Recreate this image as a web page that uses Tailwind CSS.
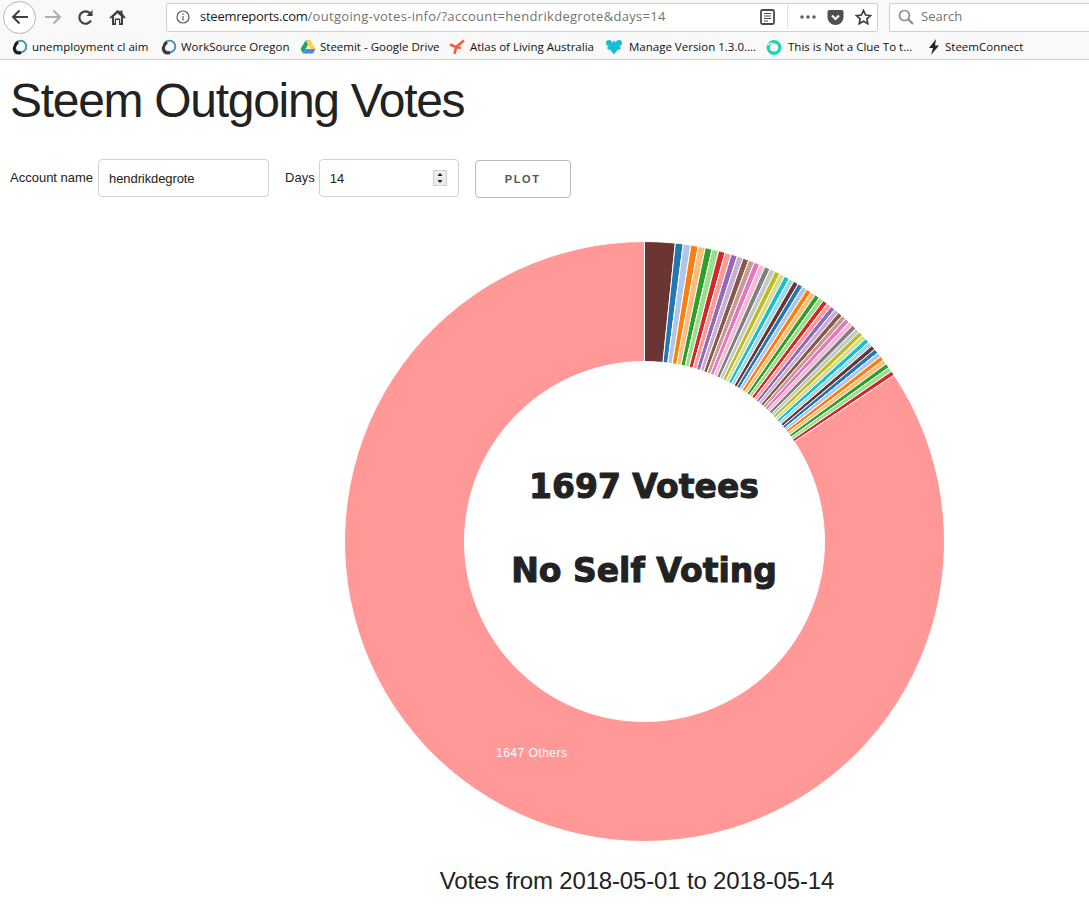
<!DOCTYPE html>
<html lang="en">

<head>
  <meta charset="UTF-8">
  <meta name="viewport" content="width=device-width, initial-scale=1.0">
  <title>Steem Outgoing Votes</title>
  <script src="https://cdn.jsdelivr.net/npm/@tailwindcss/browser@4"></script>
</head>

<body class="bg-white font-['Liberation_Sans',sans-serif] text-[#222] overflow-hidden">
  <!-- browser toolbar -->
  <div class="h-[34px] bg-[#f9f9fa] flex items-center pl-[3px] pr-0">
    <div class="w-[33px] h-[33px] rounded-full border border-[#b5b5b5] bg-white flex items-center justify-center">
      <svg class="w-[18px] h-[18px]" viewBox="0 0 18 18" fill="none" stroke="#3f3f41" stroke-width="2"><path d="M17 9H2M8.500 2.500 2 9l6.500 6.500"/></svg>
    </div>
    <svg class="w-[18px] h-[18px] ml-[8px]" viewBox="0 0 18 18" fill="none" stroke="#aeaeae" stroke-width="2"><path d="M1 9h15M9.500 2.500 16 9l-6.500 6.500"/></svg>
    <svg class="w-[17px] h-[17px] ml-[15px]" viewBox="0 0 17 17" fill="none" stroke="#3f3f41" stroke-width="2.200"><path d="M14 11.500A6.200 6.200 0 1 1 13 4.200"/><path d="M15.500 1v6h-6z" fill="#3f3f41" stroke="none"/></svg>
    <svg class="w-[17px] h-[17px] ml-[15px]" viewBox="0 0 17 17" fill="#3f3f41"><path d="M8.500 1 0.500 8.500l1.200 1.200L3 8.500V16h4v-5h3v5h4V8.500l1.300 1.200 1.200-1.200L13.500 4.200V1.500h-2v.9z"/><path d="M8.500 4.200 5 7.500V14h.8v-4.500h5.400V14h.8V7.500z" fill="#f9f9fa"/></svg>

    <div class="ml-[40px] w-[712px] h-[29px] bg-white border border-[#cfcfd1] rounded-[2px] flex items-center">
      <svg class="w-[14px] h-[14px] ml-[9px] text-[#5a5a5c]" viewBox="0 0 14 14" fill="none" stroke="currentColor" stroke-width="1.200"><circle cx="7" cy="7" r="6"/><path d="M7 6v4.500M7 3.200v1.500"/></svg>
      <div class="ml-[10px] w-[480px] font-['Open_Sans',sans-serif] text-[13px] tracking-[0.31px] whitespace-nowrap text-[#737373]"><span class="text-[#1b1b1d] tracking-[-0.25px]">steemreports.com</span>/outgoing-votes-info/?account=hendrikdegrote&amp;days=14</div>
      <svg class="w-[15px] h-[16px] ml-[80px]" viewBox="0 0 15 16" fill="none" stroke="#4a4a4c"><rect x="1" y="1" width="13" height="14" rx="1.500" stroke-width="1.800"/><path d="M4 4.500h7M4 7h7M4 9.500h7M4 12h4" stroke-width="1.100"/></svg>
      <div class="w-px h-[24px] bg-[#e3e3e4] ml-[12px]"></div>
      <svg class="w-[16px] h-[4px] ml-[12px]" viewBox="0 0 16 4" fill="#5a5a5c"><circle cx="2" cy="2" r="1.700"/><circle cx="8" cy="2" r="1.700"/><circle cx="14" cy="2" r="1.700"/></svg>
      <svg class="w-[17px] h-[15px] ml-[11px]" viewBox="0 0 16 15"><path d="M2 0h12a2 2 0 0 1 2 2v5A8 8 0 0 1 0 7V2a2 2 0 0 1 2-2z" fill="#4f4f51"/><path d="M4.500 5.500 8 9l3.500-3.500" fill="none" stroke="#f9f9fa" stroke-width="2.200"/></svg>
      <svg class="w-[17px] h-[16px] ml-[11px]" viewBox="0 0 17 16" fill="none" stroke="#3f3f41" stroke-width="1.700"><path d="m8.500 1.500 2.100 4.500 4.900.6-3.600 3.300.9 4.800-4.300-2.400-4.300 2.400.9-4.800L1.500 6.600l4.900-.6z"/></svg>
    </div>

    <div class="ml-[11px] flex-1 h-[29px] bg-white border border-[#cfcfd1] border-r-0 rounded-l-[2px] flex items-center">
      <svg class="w-[16px] h-[16px] ml-[8px]" viewBox="0 0 16 16" fill="none" stroke="#8e8e90" stroke-width="1.700"><circle cx="6.500" cy="6.500" r="5"/><path d="m10 10 5 5" stroke-width="2.200"/></svg>
      <span class="ml-[7px] font-['Open_Sans',sans-serif] text-[13px] text-[#737373]">Search</span>
    </div>
  </div>

  <!-- bookmarks -->
  <div class="h-[26px] bg-[#f9f9fa] border-b border-[#cfcfcf] flex items-center pl-[12px] font-['Open_Sans',sans-serif] text-[11.5px] text-[#111] whitespace-nowrap">
    <div class="w-[149px] flex items-center gap-[4px]">
      <svg class="w-[16px] h-[16px]" viewBox="0 0 16 16" fill="none"><circle cx="8.500" cy="7.500" r="5.800" stroke="#3b99bd" stroke-width="2"/><path d="M9 13.500C5 15 1.500 13 2.500 8.500 3 6 4.500 4 6 3" stroke="#1d1d1f" stroke-width="3"/></svg>
      <span>unemployment cl aim</span>
    </div>
    <div class="w-[139px] flex items-center gap-[4px]">
      <svg class="w-[16px] h-[16px]" viewBox="0 0 16 16" fill="none"><circle cx="8.500" cy="7.500" r="5.800" stroke="#3b8fae" stroke-width="1.800"/><path d="M9 13.500C5 15 1.500 13 2.500 8.500 3 6 4.500 4 6 3" stroke="#3a3a3c" stroke-width="3"/></svg>
      <span>WorkSource Oregon</span>
    </div>
    <div class="w-[149px] flex items-center gap-[4px]">
      <svg class="w-[16px] h-[16px]" viewBox="0 0 16 16"><path d="M5.500 1.500h5L5.500 10 3 14.500 0.500 10z" fill="#1fa463"/><path d="M5.500 1.500h5l5 8.500h-5z" fill="#ffd04b"/><path d="M5.500 10h10l-2.500 4.500H3z" fill="#4687f4"/></svg>
      <span>Steemit - Google Drive</span>
    </div>
    <div class="w-[157px] flex items-center gap-[5px]">
      <svg class="w-[16px] h-[16px]" viewBox="0 0 16 16" fill="none" stroke="#f0603e" stroke-width="2.600"><path d="M1 5.500 7 8l8-6.500M7 8l-1.500 7M7 8l5 1"/></svg>
      <span>Atlas of Living Australia</span>
    </div>
    <div class="w-[160px] flex items-center gap-[7px]">
      <svg class="w-[16px] h-[16px]" viewBox="0 0 16 16" fill="#14bfd9"><circle cx="3" cy="4" r="3"/><circle cx="13" cy="4" r="3"/><path d="M8 1.500 14 8l-6 7.500L2 8z"/><circle cx="3" cy="9" r="1.800"/><circle cx="13" cy="9" r="1.800"/></svg>
      <span>Manage Version 1.3.0....</span>
    </div>
    <div class="w-[161px] flex items-center gap-[6px]">
      <svg class="w-[16px] h-[16px]" viewBox="0 0 16 16" fill="none"><circle cx="8" cy="8.500" r="5.800" stroke="#1fd4ae" stroke-width="3.400"/><path d="M1.500 6C4 3 8.500 4.500 8.500 7.500" stroke="#fff" stroke-width="1.400"/></svg>
      <span>This is Not a Clue To t...</span>
    </div>
    <div class="flex items-center gap-[4px]">
      <svg class="w-[14px] h-[16px]" viewBox="0 0 14 16" fill="#1f2733"><path d="M9 0 2 9h4l-2 7 8-9.500H8z"/></svg>
      <span>SteemConnect</span>
    </div>
  </div>

  <!-- page -->
  <h1 class="mt-[10px] ml-[10px] text-[48px] leading-[62px] tracking-[-1.3px] font-normal">Steem Outgoing Votes</h1>

  <form class="mt-[26px] flex items-center pl-[10px] text-[13px]">
    <label for="account">Account name</label>
    <input id="account" value="hendrikdegrote" class="ml-[5px] w-[171px] h-[38px] px-[10px] bg-white border border-[#d1d1d1] rounded-[4px] tracking-[-0.1px]">
    <label for="days" class="ml-[16px]">Days</label>
    <div class="relative ml-[4px]">
      <input id="days" value="14" class="w-[140px] h-[38px] px-[10px] bg-white border border-[#d1d1d1] rounded-[4px]">
      <div class="absolute left-[114px] top-[11px] w-[14px] h-[16px] bg-[#ececec] border border-[#d0d0d0] flex flex-col items-center justify-around">
        <svg class="w-[6px] h-[3px]" viewBox="0 0 7 4" fill="#222"><path d="M3.500 0 7 4H0z"/></svg>
        <svg class="w-[6px] h-[3px]" viewBox="0 0 7 4" fill="#222"><path d="M3.500 4 0 0h7z"/></svg>
      </div>
    </div>
    <button type="button" class="ml-[16px] mt-[2px] w-[96px] h-[38px] bg-white border border-[#bbb] rounded-[4px] text-[11px] font-bold tracking-[1.6px] text-[#555]">PLOT</button>
  </form>

  <div class="relative mt-[43px] ml-[344px] w-[600px] h-[600px]">
    <svg id="pie" class="w-[600px] h-[600px]" viewBox="0 0 600 600"></svg>
    <div class="absolute left-0 right-0 top-[204px] text-center font-['DejaVu_Sans',sans-serif] font-bold text-[33px] leading-[84px] text-[#222] [-webkit-text-stroke:1px_#222] whitespace-nowrap">
      <div>1697 Votees</div>
      <div>No Self Voting</div>
    </div>
    <div class="absolute left-[152px] top-[503px] text-[12px] tracking-[0.5px] text-white whitespace-nowrap">1647 Others</div>
  </div>
  <div class="mt-[26px] ml-[240px] w-[794px] text-center text-[24px] leading-[28px] tracking-[-0.17px] text-[#222]">Votes from 2018-05-01 to 2018-05-14</div>

  <script>
    const pie = document.getElementById('pie');
    const tab20 = ['#1f77b4', '#aec7e8', '#ff7f0e', '#ffbb78', '#2ca02c', '#98df8a', '#d62728', '#ff9896', '#9467bd', '#c5b0d5',
      '#8c564b', '#c49c94', '#e377c2', '#f7b6d2', '#7f7f7f', '#c7c7c7', '#bcbd22', '#dbdb8d', '#17becf', '#9edae5'];
    const colors = ['#6b3533', ...tab20];

    const cx = 300.5, cy = 300.5, R = 300, r = 180;
    const firstSlice = 5.9, othersStart = 56.3;

    // 49 small slices, shrinking towards the big one
    let widths = [];
    for (let i = 0; i < 49; i++) widths.push(0.85 + 0.65 * Math.exp(-i / 12));
    const sum = widths.reduce((a, b) => a + b, 0);
    widths = widths.map(w => w * (othersStart - firstSlice) / sum);

    function pt(radius, deg) {
      const a = deg * Math.PI / 180;
      return (cx + radius * Math.sin(a)).toFixed(2) + ' ' + (cy - radius * Math.cos(a)).toFixed(2);
    }

    function slice(from, to, fill) {
      const large = to - from > 180 ? 1 : 0;
      const path = document.createElementNS('http://www.w3.org/2000/svg', 'path');
      path.setAttribute('d', `M${pt(R, from)}A${R} ${R} 0 ${large} 1 ${pt(R, to)}L${pt(r, to)}A${r} ${r} 0 ${large} 0 ${pt(r, from)}Z`);
      path.setAttribute('fill', fill);
      path.setAttribute('stroke', '#fff');
      path.setAttribute('stroke-width', '1');
      pie.appendChild(path);
    }

    slice(0, firstSlice, colors[0]);
    let angle = firstSlice;
    widths.forEach((w, i) => {
      slice(angle, angle + w, colors[(i + 1) % colors.length]);
      angle += w;
    });
    slice(othersStart, 360, '#ff9896');
  </script>
</body>

</html>
